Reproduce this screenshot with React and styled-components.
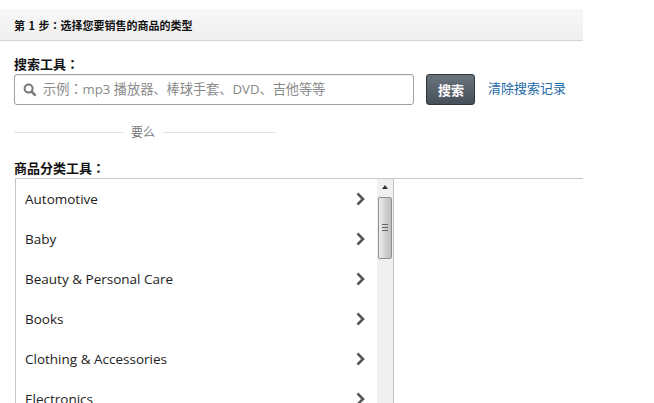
import React from "react";
import styled, { createGlobalStyle } from "styled-components";

const cjk = `"Noto Sans CJK SC", sans-serif`;
const latin = `"Open Sans", "Noto Sans CJK SC", sans-serif`;

const Global = createGlobalStyle`
    html, body {
        margin: 0;
        padding: 0;
        background: #fff;
        height: 403px;
        overflow: hidden;
    }
`;

const Page = styled.div`
    width: 583px;
    height: 403px;
    padding-top: 9px;
    box-sizing: border-box;
    overflow: hidden;
    font-family: ${latin};
    color: #111;
`;

const StepHeader = styled.div`
    height: 31px;
    padding-left: 14px;
    display: flex;
    align-items: center;
    white-space: pre;
    word-spacing: 1px;
    font-family: ${cjk};
    font-size: 11px;
    font-weight: 700;
    background: linear-gradient(#f8f8f8, #efefef);
    border-bottom: 1px solid #d4d4d4;
`;

// the colon sits centred in its cell in the reference
const Colon = styled.span`
    font-family: "Noto Sans CJK TC", sans-serif;
`;

const Section = styled.div`
    padding-left: 14px;
`;

const SearchLabel = styled.div`
    margin-top: 14px;
    font-family: ${cjk};
    font-size: 13px;
    font-weight: 700;
    line-height: 18px;
`;

const SearchRow = styled.div`
    display: flex;
    align-items: center;
    margin-top: 1px;
`;

const SearchBox = styled.div`
    width: 400px;
    height: 31px;
    box-sizing: border-box;
    border: 1px solid #a0a0a0;
    border-radius: 3px;
    display: flex;
    align-items: center;
    gap: 6px;
    padding-left: 8px;
    font-size: 13.2px;
    color: #8a8a8a;
    box-shadow: inset 0 1px 1px rgba(0, 0, 0, 0.06);
`;

const Placeholder = styled.span`
    position: relative;
    top: -1px;
`;

const SearchButton = styled.div`
    width: 49px;
    height: 31px;
    box-sizing: border-box;
    margin-left: 12px;
    padding: 0 0 1px 1px;
    border: 1px solid #30363c;
    border-radius: 3px;
    background: linear-gradient(#6b747c, #46505a);
    color: #fff;
    font-family: ${cjk};
    font-size: 13px;
    font-weight: 700;
    display: flex;
    align-items: center;
    justify-content: center;
`;

const ClearLink = styled.a`
    margin-left: 13px;
    font-family: ${cjk};
    font-size: 13px;
    color: #1c6aa8;
    position: relative;
    top: -2px;
`;

const Divider = styled.div`
    width: 261px;
    margin-top: 17px;
    display: flex;
    align-items: center;
    font-family: ${cjk};
    font-size: 12px;
    line-height: 20px;
    color: #777;
`;

const Rule = styled.div`
    flex: ${(p) => p.$grow};
    height: 1px;
    background: #e2e2e2;
`;

const DividerText = styled.span`
    padding: 0 8px;
`;

const CategoryLabel = styled.div`
    margin-top: 17px;
    padding-bottom: 1px;
    font-family: ${cjk};
    font-size: 13px;
    font-weight: 700;
    line-height: 18px;
`;

const Tree = styled.div`
    display: flex;
    height: 226px;
    margin-left: 1px;
    border-top: 1px solid #c8c8c8;
`;

const TreeColumn = styled.div`
    display: flex;
    width: 379px;
    box-sizing: border-box;
    border-left: 1px solid #c4c4c4;
    border-right: 1px solid #c0c0c0;
`;

const List = styled.div`
    flex: 1;
    overflow: hidden;
`;

const Row = styled.div`
    height: 40px;
    display: flex;
    align-items: center;
    justify-content: space-between;
    padding: 0 12px 0 9px;
    font-size: 13.5px;
    color: #222;
`;

const Scrollbar = styled.div`
    width: 16px;
    background: #f0f0f0;
    display: flex;
    flex-direction: column;
    align-items: center;
`;

const ScrollArrow = styled.div`
    margin-top: 6px;
    width: 0;
    height: 0;
    border-left: 3px solid transparent;
    border-right: 3px solid transparent;
    border-bottom: 4px solid #333;
`;

const Thumb = styled.div`
    margin-top: 8px;
    width: 14px;
    height: 62px;
    box-sizing: border-box;
    border: 1px solid #8f8f8f;
    border-radius: 2px;
    background: linear-gradient(90deg, #eeeeee, #cfcfcf 55%, #bdbdbd);
    display: flex;
    align-items: center;
    justify-content: center;
`;

const Grip = styled.div`
    width: 6px;
    height: 8px;
    background: repeating-linear-gradient(#666 0 1px, transparent 1px 3px);
`;

const Chevron = () => (
    <svg width="9" height="14" viewBox="0 0 9 14">
        <path d="M1.5 1.5 L7 7 L1.5 12.5" fill="none" stroke="#555" strokeWidth="2.6" />
    </svg>
);

const SearchIcon = () => (
    <svg width="14" height="14" viewBox="0 0 14 14">
        <circle cx="5.6" cy="5.6" r="4" fill="none" stroke="#777" strokeWidth="2" />
        <path d="M8.6 8.6 L12.6 12.6" stroke="#777" strokeWidth="2.6" />
    </svg>
);

const categories = [
    "Automotive",
    "Baby",
    "Beauty & Personal Care",
    "Books",
    "Clothing & Accessories",
    "Electronics",
];

export default function App() {
    return (
        <Page>
            <Global />
            <StepHeader>
                第 1 步<Colon>：</Colon>选择您要销售的商品的类型
            </StepHeader>
            <Section>
                <SearchLabel>
                    搜索工具<Colon>：</Colon>
                </SearchLabel>
                <SearchRow>
                    <SearchBox>
                        <SearchIcon />
                        <Placeholder>
                            示例<Colon>：</Colon>mp3 播放器、棒球手套、DVD、吉他等等
                        </Placeholder>
                    </SearchBox>
                    <SearchButton>搜索</SearchButton>
                    <ClearLink>清除搜索记录</ClearLink>
                </SearchRow>
                <Divider>
                    <Rule $grow={109} />
                    <DividerText>要么</DividerText>
                    <Rule $grow={112} />
                </Divider>
                <CategoryLabel>
                    商品分类工具<Colon>：</Colon>
                </CategoryLabel>
                <Tree>
                    <TreeColumn>
                        <List>
                            {categories.map((name) => (
                                <Row key={name}>
                                    {name}
                                    <Chevron />
                                </Row>
                            ))}
                        </List>
                        <Scrollbar>
                            <ScrollArrow />
                            <Thumb>
                                <Grip />
                            </Thumb>
                        </Scrollbar>
                    </TreeColumn>
                </Tree>
            </Section>
        </Page>
    );
}
